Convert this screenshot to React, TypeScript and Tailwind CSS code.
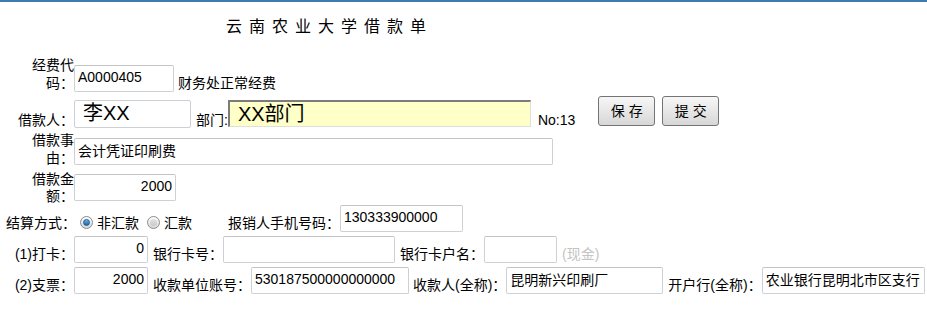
import type { ReactNode } from 'react';

const font = 'font-["Liberation_Sans","Noto_Sans_CJK_SC",sans-serif]';

function Field({
  value,
  className = '',
  right = false,
}: {
  value: string;
  className?: string;
  right?: boolean;
}) {
  return (
    <input
      readOnly
      value={value}
      className={`h-[27px] shrink-0 rounded-[2px] border border-[#cdd0d4] border-t-[#c4c4c4] bg-white px-[3px] pb-[4px] text-[14px] text-black outline-none ${
        right ? 'text-right' : ''
      } ${className}`}
    />
  );
}

function Label({ children, className = '' }: { children: ReactNode; className?: string }) {
  return <span className={`shrink-0 whitespace-nowrap text-[14px] leading-[18px] ${className}`}>{children}</span>;
}

// 两行标签：右对齐，宽 42px 自动换行
function TwoLine({ text, lh = 'leading-[18px]' }: { text: string; lh?: string }) {
  return (
    <div className="flex w-[74px] shrink-0 justify-end">
      <span className={`block w-[42px] text-right text-[14px] ${lh}`}>{text}</span>
    </div>
  );
}

function Radio({ checked }: { checked?: boolean }) {
  return (
    <span className="flex h-[13px] w-[13px] shrink-0 items-center justify-center rounded-full border border-[#8c8c8c] bg-linear-to-b from-[#fdfdfd] to-[#d6d6d6]">
      {checked ? (
        <span className="h-[7px] w-[7px] rounded-full border border-[#1c5d93] bg-linear-to-b from-[#5fb1ec] to-[#1769b0]" />
      ) : (
        <span className="h-[7px] w-[7px] rounded-full bg-linear-to-b from-[#e2e2e2] to-[#c9c9c9]" />
      )}
    </span>
  );
}

function Btn({ children }: { children: ReactNode }) {
  return (
    <button className="h-[30px] w-[57px] shrink-0 rounded-[3px] border border-[#747474] bg-linear-to-b from-[#f7f7f7] to-[#d7d7d7] text-[14px] text-black">
      {children}
    </button>
  );
}

export default function App() {
  return (
    <div className={`h-[318px] w-[927px] overflow-hidden border-t-2 border-[#3f7cae] bg-white text-black ${font}`}>
      <div className="pl-[226px] pt-[13px] text-[16px] leading-[20px] tracking-[7px] font-['Noto_Sans_CJK_SC',sans-serif]">
        云南农业大学借款单
      </div>

      {/* 经费代码 */}
      <div className="mt-[21px] flex items-end">
        <TwoLine text="经费代码：" />
        <Field value="A0000405" className="w-[100px]" />
        <Label className="ml-[4px]">财务处正常经费</Label>
      </div>

      {/* 借款人 / 部门 */}
      <div className="mt-[4px] flex h-[33px] items-end">
        <Label className="w-[74px] text-right">借款人：</Label>
        <input
          readOnly
          value="李XX"
          className="mb-[1px] h-[28px] w-[117px] shrink-0 self-start mt-[4px] rounded-[2px] border border-[#cdd0d4] bg-white pl-[8px] pb-[3px] text-[20px] outline-none"
        />
        <Label className="ml-[5px]">部门:</Label>
        <input
          readOnly
          value="XX部门"
          className="mt-[4px] h-[27px] w-[303px] shrink-0 self-start border-l-2 border-t-2 border-b border-r border-l-[#7c7c7c] border-t-[#7c7c7c] border-b-[#dedede] border-r-[#dedede] bg-[#ffffc8] pl-[8px] pb-[3px] text-[20px] leading-none outline-none"
        />
        <Label className="ml-[7px]">No:13</Label>
        <div className="ml-[23px] flex gap-[7px] self-start">
          <Btn>保 存</Btn>
          <Btn>提 交</Btn>
        </div>
      </div>

      {/* 借款事由 */}
      <div className="mt-[2px] flex items-end">
        <TwoLine text="借款事由：" />
        <Field value="会计凭证印刷费" className="mb-[2px] w-[479px]" />
      </div>

      {/* 借款金额 */}
      <div className="mt-[3px] flex h-[35px] items-center">
        <TwoLine text="借款金额：" lh="leading-[17px]" />
        <Field value="2000" right className="w-[102px]" />
      </div>

      {/* 结算方式 */}
      <div className="flex h-[27px] items-end">
        <Label className="w-[76px] text-right">结算方式：</Label>
        <span className="mb-[3px] ml-[4px] flex items-center">
          <Radio checked />
        </span>
        <Label className="ml-[4px]">非汇款</Label>
        <span className="mb-[3px] ml-[8px] flex items-center">
          <Radio />
        </span>
        <Label className="ml-[4px]">汇款</Label>
        <Label className="ml-[36px]">报销人手机号码：</Label>
        <Field value="130333900000" className="w-[123px]" />
      </div>

      {/* (1)打卡 */}
      <div className="mt-[4px] flex h-[27px] items-end">
        <Label className="w-[74px] text-right">(1)打卡：</Label>
        <Field value="0" right className="w-[74px]" />
        <Label className="ml-[5px]">银行卡号：</Label>
        <Field value="" className="w-[172px]" />
        <Label className="ml-[5px]">银行卡户名：</Label>
        <Field value="" className="w-[73px]" />
        <Label className="ml-[5px] text-[#c4c4c4]">(现金)</Label>
      </div>

      {/* (2)支票 */}
      <div className="mt-[4px] flex h-[27px] items-end">
        <Label className="w-[74px] text-right">(2)支票：</Label>
        <Field value="2000" right className="w-[74px]" />
        <Label className="ml-[5px]">收款单位账号：</Label>
        <Field value="530187500000000000" className="w-[158px]" />
        <Label className="ml-[4px]">收款人(全称)：</Label>
        <Field value="昆明新兴印刷厂" className="w-[157px]" />
        <Label className="ml-[5px]">开户行(全称)：</Label>
        <Field value="农业银行昆明北市区支行" className="w-[163px]" />
      </div>
    </div>
  );
}
